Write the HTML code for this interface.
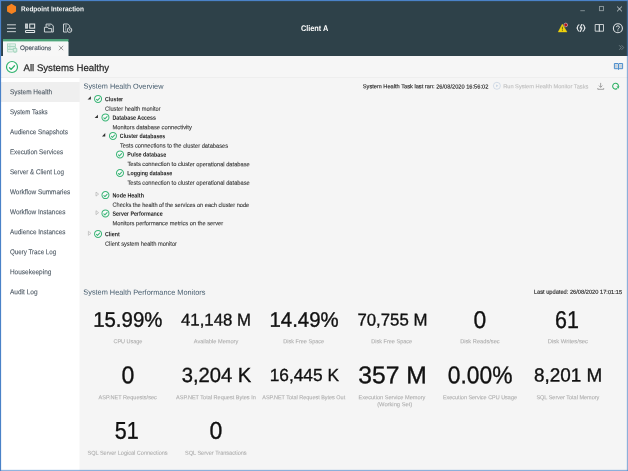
<!DOCTYPE html>
<html lang="en">
<head>
<meta charset="utf-8">
<title>Redpoint Interaction - Operations</title>
<style>
html,body{margin:0;padding:0;}
body{width:628px;height:471px;overflow:hidden;position:relative;background:#f5f5f5;font-family:"Liberation Sans", sans-serif;}
.a{position:absolute;display:block;}
.t{position:absolute;display:block;white-space:pre;font-family:"Liberation Sans", sans-serif;text-rendering:geometricPrecision;transform-origin:0 50%;}
#win{position:absolute;left:0;top:0;width:628px;height:471px;overflow:hidden;}
#txt{left:0;top:0;width:628px;height:471px;will-change:transform;}
#hdr{left:0;top:0;width:628px;height:56px;background:#2e4149;}
#tab{left:3px;top:39px;width:66px;height:17px;background:linear-gradient(90deg,#f7f7f7 0,#f7f7f7 65px,#93a0a5 65px,#93a0a5 66px);}
#tabg{left:3px;top:39px;width:66px;height:3px;background:linear-gradient(#4da37a 0,#4da37a 2px,#b4d9c6 2px,#b4d9c6 3px);}
#tabg2{left:68px;top:39px;width:1px;height:3px;background:#3f7463;}
#status{left:0;top:56px;width:628px;height:22px;background:#f6f6f6;}
#sline{left:0;top:77px;width:628px;height:1px;background:#eeeeee;}
#side{left:0;top:78px;width:80px;height:393px;background:linear-gradient(90deg,#fff 0,#fff 79px,#fafafa 79px,#fafafa 80px);}
#sel{left:0;top:82px;width:80px;height:20px;background:linear-gradient(90deg,#efefef 0,#efefef 79px,#f1f1f1 79px,#f1f1f1 80px);}
#bl{left:0;top:0;width:1px;height:471px;background:#4a82c8;}
#bl2{left:1px;top:0;width:1px;height:471px;background:rgba(74,130,200,0.1);}
#bt{left:0;top:0;width:628px;height:1px;background:#4a82c8;}
#bt2{left:0;top:1px;width:628px;height:1px;background:rgba(74,130,200,0.12);}
#br{left:627px;top:0;width:1px;height:471px;background:rgba(74,130,200,0.6);}
#br2{left:626px;top:0;width:1px;height:471px;background:rgba(74,134,210,0.1);}
#bb2{left:0;top:469px;width:628px;height:1px;background:rgba(74,134,210,0.1);}
#bb{left:0;top:470px;width:628px;height:1px;background:rgba(74,130,200,0.6);}

</style>
</head>
<body>
<div id="win">
<div class="a" id="hdr"></div>
<div class="a" id="tab"></div>
<div class="a" id="tabg"></div>
<div class="a" id="tabg2"></div>
<div class="a" id="status"></div>
<div class="a" id="sline"></div>
<div class="a" id="side"></div>
<div class="a" id="sel"></div>

<svg class="a" id="ico" style="left:0;top:0" width="628" height="471" viewBox="0 0 628 471">
<!-- logo -->
<path d="M11.55 3.8 L16.05 6.4 L16.05 11.5 L11.55 14.1 L7.05 11.5 L7.05 6.4 Z" fill="#f58220"/>
<!-- hamburger -->
<path d="M7 24.8 H15.9 M7 28.3 H15.9 M7 31.65 H15.9" stroke="#d5dadc" stroke-width="0.95" fill="none"/>
<!-- dashboard -->
<g fill="none" stroke="#e4e8ea" stroke-width="1.05">
<rect x="25.55" y="24.05" width="1.9" height="4.1" fill="#aeb7bb" stroke="#c9cfd2"/>
<rect x="29.75" y="24.05" width="4.9" height="4.1"/>
<rect x="25.55" y="30.45" width="9.1" height="2.1" rx="0.5"/>
</g>
<!-- file + folder -->
<g fill="none" stroke="#dde2e4" stroke-width="0.9">
<path d="M46.1 26.9 V24.1 H51.4 L53.3 26 V32 H51.9"/>
<path d="M47.7 25.8 H50.3" stroke-width="0.7"/>
<path d="M44.45 27.3 H47.7 L48.5 28.6 H51.7 V32 H44.45 Z"/>
</g>
<!-- file + clock -->
<g fill="none" stroke="#dde2e4" stroke-width="0.9">
<path d="M67 32 H63.5 V24 H67.8 L69.7 25.9 V27.3"/>
<path d="M65 26 H66.9 M65 28 H66.3 M65 29.9 H66" stroke-width="0.8"/>
<circle cx="69.5" cy="30.05" r="2.3" stroke-width="0.95"/>
<path d="M69.45 28.9 V30.2 H70.5" stroke-width="0.7"/>
</g>
<!-- tab icon -->
<g fill="none" stroke="#98cfb4" stroke-width="0.75">
<rect x="7.6" y="43.9" width="7.8" height="2.3" fill="#ecf6f1"/>
<rect x="7.6" y="46.8" width="7.8" height="2.3" fill="#ecf6f1"/>
<path d="M12.6 49.7 H7.6 V51.9 H12.6"/>
<path d="M9 45.05 H10.6 M9 47.95 H10.6" stroke-width="0.6"/>
<rect x="13.2" y="48.3" width="3.6" height="3.7" rx="0.5" fill="#dcefe6" stroke="#86c8aa"/>
<path d="M15 52 V53" stroke-width="0.7"/>
</g>
<!-- tab close -->
<path d="M59 45.8 L63.2 50.2 M63.2 45.8 L59 50.2" stroke="#6a6a6a" stroke-width="0.7" fill="none"/>
<!-- window controls -->
<path d="M580.3 10.7 H584.9" stroke="#87949a" stroke-width="0.9"/>
<rect x="599.45" y="6.45" width="4" height="4.2" fill="none" stroke="#8d999e" stroke-width="0.95"/>
<path d="M617.1 6.6 L621.9 11.3 M621.9 6.6 L617.1 11.3" stroke="#dfe4e6" stroke-width="0.85" fill="none"/>
<!-- warning -->
<path d="M562.3 24.1 L567 32 H558.2 Z" fill="#efd20c" stroke="#efd20c" stroke-width="0.4" stroke-linejoin="round"/>
<path d="M562.4 26.7 V29.5 M562.4 30.2 V31.1" stroke="#5a531c" stroke-width="0.85"/>
<circle cx="565.75" cy="24.95" r="1.85" fill="#b5121b" stroke="#dcdcdc" stroke-width="0.55"/>
<!-- sync -->
<g fill="none" stroke="#e2e6e8" stroke-width="1.1" stroke-linecap="round" stroke-linejoin="round">
<path d="M579 24.8 C576.8 26 576.8 30 579 31.2"/>
<path d="M583 24.8 C585.2 26 585.2 30 583 31.2"/>
<path d="M577.8 27 L576.6 28 L577.8 29 M584.2 27 L585.4 28 L584.2 29" stroke-width="0.8"/>
<path d="M581.7 24.5 L580.1 27.9 H581.9 L580.3 31.5" stroke-width="1.15"/>
</g>
<!-- book -->
<g fill="none" stroke="#d9dee0" stroke-width="0.9" stroke-linejoin="round">
<path d="M595.2 24.5 H599.35 V31.2 H595.2 Z"/>
<path d="M599.35 24.5 H603.5 V31.2 H599.35 Z"/>
<path d="M599.35 31.2 V31.8"/>
</g>
<!-- help -->
<circle cx="617.9" cy="28.2" r="4.5" fill="none" stroke="#e0e4e6" stroke-width="1.1"/>
<path d="M616.4 27.2 C616.4 25.3 619.4 25.3 619.4 27.2 C619.4 28.4 617.9 28.3 617.9 29.6 M617.9 30.4 V31.3" fill="none" stroke="#e0e4e6" stroke-width="1"/>
<!-- chevrons -->
<path d="M619.2 45.3 L621.3 47.55 L619.2 49.8 M621.6 45.3 L623.7 47.55 L621.6 49.8" fill="none" stroke="#7d8b92" stroke-width="0.8"/>
<!-- status right book icon -->
<g>
<path d="M614.4 63.5 H618 L618.5 63.9 L619 63.5 H622.6 V68.7 H619.3 L618.5 69.6 L617.7 68.7 H614.4 Z" fill="#d3dde6" stroke="#3f86c9" stroke-width="0.9" stroke-linejoin="round"/>
<path d="M618.5 64 V69.2" stroke="#3f86c9" stroke-width="0.9"/>
<path d="M615.6 64.9 V67.4 M616.8 64.9 V67.4 M620.2 64.9 V67.4 M621.4 64.9 V67.4" stroke="#b9c4cd" stroke-width="0.6"/>
</g>
<!-- play -->
<circle cx="496.9" cy="85.8" r="3.5" fill="none" stroke="#bccbdd" stroke-width="0.6"/>
<path d="M496.1 84.4 L498.3 85.8 L496.1 87.2 Z" fill="#c5d3e3"/>
<!-- download -->
<path d="M600.65 82.9 V87.2 M598.9 85.6 L600.65 87.4 L602.4 85.6 M597.8 88.1 V89.3 H603.7 V88.1" fill="none" stroke="#808080" stroke-width="0.7"/>
<!-- refresh -->
<path d="M617.3 88.5 A2.9 2.9 0 1 1 618.4 86.7" fill="none" stroke="#2bb062" stroke-width="1.05"/>
<path d="M616.5 86.6 L618.3 88.7 L619.5 86.2 Z" fill="#2bb062"/>
<!-- status check -->
<g transform="translate(12.00 67.00) scale(0.6395)"><circle r="8.6" fill="#fff" fill-opacity="0.6" stroke="#2fb36e" stroke-width="1.88"/><path d="M-3.9 1.2 L-1.3 3.8 L3.9 -2.0" fill="none" stroke="#2fb36e" stroke-width="1.97" stroke-linecap="round" stroke-linejoin="round"/></g>
<!-- tree checks -->
<g transform="translate(98.05 98.90) scale(0.4070)"><circle r="8.6" fill="#fff" fill-opacity="0.5" stroke="#3bb577" stroke-width="2.46"/><path d="M-3.9 1.2 L-1.3 3.8 L3.9 -2.0" fill="none" stroke="#3bb577" stroke-width="2.58" stroke-linecap="round" stroke-linejoin="round"/></g>
<g transform="translate(105.45 117.40) scale(0.4070)"><circle r="8.6" fill="#fff" fill-opacity="0.5" stroke="#3bb577" stroke-width="2.46"/><path d="M-3.9 1.2 L-1.3 3.8 L3.9 -2.0" fill="none" stroke="#3bb577" stroke-width="2.58" stroke-linecap="round" stroke-linejoin="round"/></g>
<g transform="translate(112.95 135.90) scale(0.4070)"><circle r="8.6" fill="#fff" fill-opacity="0.5" stroke="#3bb577" stroke-width="2.46"/><path d="M-3.9 1.2 L-1.3 3.8 L3.9 -2.0" fill="none" stroke="#3bb577" stroke-width="2.58" stroke-linecap="round" stroke-linejoin="round"/></g>
<g transform="translate(120.00 154.40) scale(0.4070)"><circle r="8.6" fill="#fff" fill-opacity="0.5" stroke="#3bb577" stroke-width="2.46"/><path d="M-3.9 1.2 L-1.3 3.8 L3.9 -2.0" fill="none" stroke="#3bb577" stroke-width="2.58" stroke-linecap="round" stroke-linejoin="round"/></g>
<g transform="translate(120.00 173.00) scale(0.4070)"><circle r="8.6" fill="#fff" fill-opacity="0.5" stroke="#3bb577" stroke-width="2.46"/><path d="M-3.9 1.2 L-1.3 3.8 L3.9 -2.0" fill="none" stroke="#3bb577" stroke-width="2.58" stroke-linecap="round" stroke-linejoin="round"/></g>
<g transform="translate(105.45 195.10) scale(0.4070)"><circle r="8.6" fill="#fff" fill-opacity="0.5" stroke="#3bb577" stroke-width="2.46"/><path d="M-3.9 1.2 L-1.3 3.8 L3.9 -2.0" fill="none" stroke="#3bb577" stroke-width="2.58" stroke-linecap="round" stroke-linejoin="round"/></g>
<g transform="translate(105.45 213.40) scale(0.4070)"><circle r="8.6" fill="#fff" fill-opacity="0.5" stroke="#3bb577" stroke-width="2.46"/><path d="M-3.9 1.2 L-1.3 3.8 L3.9 -2.0" fill="none" stroke="#3bb577" stroke-width="2.58" stroke-linecap="round" stroke-linejoin="round"/></g>
<g transform="translate(98.05 233.90) scale(0.4070)"><circle r="8.6" fill="#fff" fill-opacity="0.5" stroke="#3bb577" stroke-width="2.46"/><path d="M-3.9 1.2 L-1.3 3.8 L3.9 -2.0" fill="none" stroke="#3bb577" stroke-width="2.58" stroke-linecap="round" stroke-linejoin="round"/></g>
<!-- tree arrows -->
<path d="M90.90 99.60 l0 -3.3 l-3.3 3.3 Z" fill="#303030"/>
<path d="M97.95 118.10 l0 -3.3 l-3.3 3.3 Z" fill="#303030"/>
<path d="M105.25 136.40 l0 -3.3 l-3.3 3.3 Z" fill="#303030"/>
<path d="M96.00 192.10 l2.6 2 l-2.6 2 Z" fill="none" stroke="#aaa" stroke-width="0.6"/>
<path d="M96.00 210.70 l2.6 2 l-2.6 2 Z" fill="none" stroke="#aaa" stroke-width="0.6"/>
<path d="M88.40 231.30 l2.6 2 l-2.6 2 Z" fill="none" stroke="#aaa" stroke-width="0.6"/>
</svg>

<div class="a" id="txt">
<span class="t" style="left:21px;top:6px;font-size:7px;line-height:7px;font-weight:700;color:#f4f6f7;transform:translate(0.11px,0.30px) rotate(0.06deg) scaleX(0.9240)">Redpoint Interaction</span>
<span class="t" style="left:300px;top:24px;font-size:8.2px;line-height:8.2px;font-weight:700;color:#ffffff;transform:translate(0.91px,0.90px) rotate(0.06deg) scaleX(0.8927)">Client A</span>
<span class="t" style="left:20px;top:46px;font-size:6.6px;line-height:6.6px;font-weight:400;color:#47535e;-webkit-text-stroke:0.15px #47535e;transform:translate(0.05px,0.10px) rotate(0.06deg) scaleX(0.9647)">Operations</span>
<span class="t" style="left:23px;top:64px;font-size:9.6px;line-height:9.6px;font-weight:400;color:#2b2b2b;-webkit-text-stroke:0.25px #2b2b2b;transform:translate(0.50px,0.00px) rotate(0.06deg) scaleX(1.0040)">All Systems Healthy</span>
<span class="t" style="left:9px;top:89px;font-size:7.1px;line-height:7.1px;font-weight:400;color:#48545f;-webkit-text-stroke:0.1px #48545f;transform:translate(0.95px,0.30px) rotate(0.06deg) scaleX(0.9122)">System Health</span>
<span class="t" style="left:9px;top:109px;font-size:7.1px;line-height:7.1px;font-weight:400;color:#48545f;-webkit-text-stroke:0.1px #48545f;transform:translate(0.95px,0.30px) rotate(0.06deg) scaleX(0.8639)">System Tasks</span>
<span class="t" style="left:9px;top:129px;font-size:7.1px;line-height:7.1px;font-weight:400;color:#48545f;-webkit-text-stroke:0.1px #48545f;transform:translate(0.95px,0.30px) rotate(0.06deg) scaleX(0.8911)">Audience Snapshots</span>
<span class="t" style="left:9px;top:149px;font-size:7.1px;line-height:7.1px;font-weight:400;color:#48545f;-webkit-text-stroke:0.1px #48545f;transform:translate(0.95px,0.30px) rotate(0.06deg) scaleX(0.8801)">Execution Services</span>
<span class="t" style="left:9px;top:169px;font-size:7.1px;line-height:7.1px;font-weight:400;color:#48545f;-webkit-text-stroke:0.1px #48545f;transform:translate(0.95px,0.30px) rotate(0.06deg) scaleX(0.8788)">Server &amp; Client Log</span>
<span class="t" style="left:9px;top:189px;font-size:7.1px;line-height:7.1px;font-weight:400;color:#48545f;-webkit-text-stroke:0.1px #48545f;transform:translate(0.95px,0.30px) rotate(0.06deg) scaleX(0.9015)">Workflow Summaries</span>
<span class="t" style="left:9px;top:209px;font-size:7.1px;line-height:7.1px;font-weight:400;color:#48545f;-webkit-text-stroke:0.1px #48545f;transform:translate(0.95px,0.30px) rotate(0.06deg) scaleX(0.9026)">Workflow Instances</span>
<span class="t" style="left:9px;top:229px;font-size:7.1px;line-height:7.1px;font-weight:400;color:#48545f;-webkit-text-stroke:0.1px #48545f;transform:translate(0.95px,0.30px) rotate(0.06deg) scaleX(0.8946)">Audience Instances</span>
<span class="t" style="left:9px;top:249px;font-size:7.1px;line-height:7.1px;font-weight:400;color:#48545f;-webkit-text-stroke:0.1px #48545f;transform:translate(0.95px,0.30px) rotate(0.06deg) scaleX(0.8753)">Query Trace Log</span>
<span class="t" style="left:9px;top:269px;font-size:7.1px;line-height:7.1px;font-weight:400;color:#48545f;-webkit-text-stroke:0.1px #48545f;transform:translate(0.95px,0.30px) rotate(0.06deg) scaleX(0.9123)">Housekeeping</span>
<span class="t" style="left:9px;top:289px;font-size:7.1px;line-height:7.1px;font-weight:400;color:#48545f;-webkit-text-stroke:0.1px #48545f;transform:translate(0.95px,0.30px) rotate(0.06deg) scaleX(0.9205)">Audit Log</span>
<span class="t" style="left:83px;top:82px;font-size:7.3px;line-height:7.3px;font-weight:400;color:#435a6c;transform:translate(0.61px,0.60px) rotate(0.06deg) scaleX(0.9989)">System Health Overview</span>
<span class="t" style="left:83px;top:288px;font-size:7.3px;line-height:7.3px;font-weight:400;color:#435a6c;transform:translate(0.31px,0.60px) rotate(0.06deg) scaleX(1.0075)">System Health Performance Monitors</span>
<span class="t" style="left:362px;top:85px;font-size:5.8px;line-height:5.8px;font-weight:400;color:#2a2a2a;-webkit-text-stroke:0.15px #2a2a2a;transform:translate(0.77px,0.30px) rotate(0.06deg) scaleX(0.9795)">System Health Task last ran: 26/08/2020 16:56:02</span>
<span class="t" style="left:503px;top:85px;font-size:5.8px;line-height:5.8px;font-weight:400;color:#bebebe;-webkit-text-stroke:0.12px #bebebe;transform:translate(0.15px,0.30px) rotate(0.06deg) scaleX(0.9768)">Run System Health Monitor Tasks</span>
<span class="t" style="left:533px;top:290px;font-size:5.8px;line-height:5.8px;font-weight:400;color:#2a2a2a;-webkit-text-stroke:0.15px #2a2a2a;transform:translate(0.84px,0.80px) rotate(0.06deg) scaleX(0.9820)">Last updated: 26/08/2020 17:01:15</span>
<span class="t" style="left:105px;top:97px;font-size:6.25px;line-height:6.25px;font-weight:700;color:#222;transform:translate(0.00px,0.20px) rotate(0.06deg) scaleX(0.8428)">Cluster</span>
<span class="t" style="left:105px;top:106px;font-size:6px;line-height:6px;font-weight:400;color:#3a3a3a;-webkit-text-stroke:0.12px #3a3a3a;transform:translate(0.05px,0.66px) rotate(0.06deg) scaleX(0.9477)">Cluster health monitor</span>
<span class="t" style="left:112px;top:115px;font-size:6.25px;line-height:6.25px;font-weight:700;color:#222;transform:translate(0.45px,0.80px) rotate(0.06deg) scaleX(0.8487)">Database Access</span>
<span class="t" style="left:112px;top:125px;font-size:6px;line-height:6px;font-weight:400;color:#3a3a3a;-webkit-text-stroke:0.12px #3a3a3a;transform:translate(0.50px,0.26px) rotate(0.06deg) scaleX(0.9626)">Monitors database connectivity</span>
<span class="t" style="left:119px;top:134px;font-size:6.25px;line-height:6.25px;font-weight:700;color:#222;transform:translate(0.85px,0.10px) rotate(0.06deg) scaleX(0.8421)">Cluster databases</span>
<span class="t" style="left:119px;top:143px;font-size:6px;line-height:6px;font-weight:400;color:#3a3a3a;-webkit-text-stroke:0.12px #3a3a3a;transform:translate(0.90px,0.56px) rotate(0.06deg) scaleX(0.9576)">Tests connections to the cluster databases</span>
<span class="t" style="left:127px;top:152px;font-size:6.25px;line-height:6.25px;font-weight:700;color:#222;transform:translate(0.35px,0.60px) rotate(0.06deg) scaleX(0.8524)">Pulse database</span>
<span class="t" style="left:127px;top:162px;font-size:6px;line-height:6px;font-weight:400;color:#3a3a3a;-webkit-text-stroke:0.12px #3a3a3a;transform:translate(0.40px,0.06px) rotate(0.06deg) scaleX(0.9524)">Tests connection to cluster operational database</span>
<span class="t" style="left:127px;top:171px;font-size:6.25px;line-height:6.25px;font-weight:700;color:#222;transform:translate(0.35px,0.20px) rotate(0.06deg) scaleX(0.8394)">Logging database</span>
<span class="t" style="left:127px;top:180px;font-size:6px;line-height:6px;font-weight:400;color:#3a3a3a;-webkit-text-stroke:0.12px #3a3a3a;transform:translate(0.40px,0.66px) rotate(0.06deg) scaleX(0.9524)">Tests connection to cluster operational database</span>
<span class="t" style="left:112px;top:193px;font-size:6.25px;line-height:6.25px;font-weight:700;color:#222;transform:translate(0.45px,0.40px) rotate(0.06deg) scaleX(0.8633)">Node Health</span>
<span class="t" style="left:112px;top:202px;font-size:6px;line-height:6px;font-weight:400;color:#3a3a3a;-webkit-text-stroke:0.12px #3a3a3a;transform:translate(0.50px,0.86px) rotate(0.06deg) scaleX(0.9379)">Checks the health of the services on each cluster node</span>
<span class="t" style="left:112px;top:211px;font-size:6.25px;line-height:6.25px;font-weight:700;color:#222;transform:translate(0.45px,0.70px) rotate(0.06deg) scaleX(0.8465)">Server Performance</span>
<span class="t" style="left:112px;top:221px;font-size:6px;line-height:6px;font-weight:400;color:#3a3a3a;-webkit-text-stroke:0.12px #3a3a3a;transform:translate(0.50px,0.16px) rotate(0.06deg) scaleX(0.9529)">Monitors performance metrics on the server</span>
<span class="t" style="left:104px;top:232px;font-size:6.25px;line-height:6.25px;font-weight:700;color:#222;transform:translate(0.95px,0.20px) rotate(0.06deg) scaleX(0.8505)">Client</span>
<span class="t" style="left:105px;top:241px;font-size:6px;line-height:6px;font-weight:400;color:#3a3a3a;-webkit-text-stroke:0.12px #3a3a3a;transform:translate(0.00px,0.66px) rotate(0.06deg) scaleX(0.9508)">Client system health monitor</span>
<span class="t" style="left:93px;top:309px;font-size:21px;line-height:21px;font-weight:400;color:#111;-webkit-text-stroke:0.35px #111;transform:translate(0.17px,0.82px) rotate(0.06deg) scaleX(0.9719)">15.99%</span>
<span class="t" style="left:113px;top:340px;font-size:5.8px;line-height:5.8px;font-weight:400;color:#adadad;-webkit-text-stroke:0.1px #adadad;transform:translate(0.53px,0.30px) rotate(0.06deg) scaleX(0.9428)">CPU Usage</span>
<span class="t" style="left:181px;top:311px;font-size:17px;line-height:17px;font-weight:400;color:#111;-webkit-text-stroke:0.35px #111;transform:translate(0.07px,0.41px) rotate(0.06deg) scaleX(0.9841)">41,148 M</span>
<span class="t" style="left:193px;top:340px;font-size:5.8px;line-height:5.8px;font-weight:400;color:#adadad;-webkit-text-stroke:0.1px #adadad;transform:translate(0.80px,0.30px) rotate(0.06deg) scaleX(0.9654)">Available Memory</span>
<span class="t" style="left:269px;top:309px;font-size:21px;line-height:21px;font-weight:400;color:#111;-webkit-text-stroke:0.35px #111;transform:translate(0.47px,0.82px) rotate(0.06deg) scaleX(0.9705)">14.49%</span>
<span class="t" style="left:283px;top:340px;font-size:5.8px;line-height:5.8px;font-weight:400;color:#adadad;-webkit-text-stroke:0.1px #adadad;transform:translate(0.36px,0.30px) rotate(0.06deg) scaleX(0.9503)">Disk Free Space</span>
<span class="t" style="left:357px;top:311px;font-size:17px;line-height:17px;font-weight:400;color:#111;-webkit-text-stroke:0.35px #111;transform:translate(0.46px,0.41px) rotate(0.06deg) scaleX(0.9871)">70,755 M</span>
<span class="t" style="left:371px;top:340px;font-size:5.8px;line-height:5.8px;font-weight:400;color:#adadad;-webkit-text-stroke:0.1px #adadad;transform:translate(0.36px,0.30px) rotate(0.06deg) scaleX(0.9503)">Disk Free Space</span>
<span class="t" style="left:473px;top:308px;font-size:24.25px;line-height:24.25px;font-weight:400;color:#111;-webkit-text-stroke:0.35px #111;transform:translate(0.61px,0.92px) rotate(0.06deg) scaleX(0.9426)">0</span>
<span class="t" style="left:460px;top:340px;font-size:5.8px;line-height:5.8px;font-weight:400;color:#adadad;-webkit-text-stroke:0.1px #adadad;transform:translate(0.14px,0.30px) rotate(0.06deg) scaleX(0.9821)">Disk Reads/sec</span>
<span class="t" style="left:555px;top:308px;font-size:24.25px;line-height:24.25px;font-weight:400;color:#111;-webkit-text-stroke:0.35px #111;transform:translate(0.13px,0.92px) rotate(0.06deg) scaleX(0.8847)">61</span>
<span class="t" style="left:547px;top:340px;font-size:5.8px;line-height:5.8px;font-weight:400;color:#adadad;-webkit-text-stroke:0.1px #adadad;transform:translate(0.83px,0.30px) rotate(0.06deg) scaleX(1.0083)">Disk Writes/sec</span>
<span class="t" style="left:121px;top:364px;font-size:24.25px;line-height:24.25px;font-weight:400;color:#111;-webkit-text-stroke:0.35px #111;transform:translate(0.51px,0.22px) rotate(0.06deg) scaleX(0.9510)">0</span>
<span class="t" style="left:98px;top:396px;font-size:5.8px;line-height:5.8px;font-weight:400;color:#adadad;-webkit-text-stroke:0.1px #adadad;transform:translate(0.60px,0.20px) rotate(0.06deg) scaleX(0.9587)">ASP.NET Requests/sec</span>
<span class="t" style="left:181px;top:365px;font-size:20.5px;line-height:20.5px;font-weight:400;color:#111;-webkit-text-stroke:0.35px #111;transform:translate(0.69px,0.95px) rotate(0.06deg) scaleX(0.9841)">3,204 K</span>
<span class="t" style="left:176px;top:396px;font-size:5.8px;line-height:5.8px;font-weight:400;color:#adadad;-webkit-text-stroke:0.1px #adadad;transform:translate(0.00px,0.20px) rotate(0.06deg) scaleX(0.9558)">ASP.NET Total Request Bytes In</span>
<span class="t" style="left:269px;top:366px;font-size:17.5px;line-height:17.5px;font-weight:400;color:#111;-webkit-text-stroke:0.35px #111;transform:translate(0.69px,0.92px) rotate(0.06deg) scaleX(0.9882)">16,445 K</span>
<span class="t" style="left:262px;top:396px;font-size:5.8px;line-height:5.8px;font-weight:400;color:#adadad;-webkit-text-stroke:0.1px #adadad;transform:translate(0.30px,0.20px) rotate(0.06deg) scaleX(0.9418)">ASP.NET Total Request Bytes Out</span>
<span class="t" style="left:358px;top:364px;font-size:24.25px;line-height:24.25px;font-weight:400;color:#111;-webkit-text-stroke:0.35px #111;transform:translate(0.26px,0.22px) rotate(0.06deg) scaleX(1.0154)">357 M</span>
<span class="t" style="left:358px;top:396px;font-size:5.8px;line-height:5.8px;font-weight:400;color:#adadad;-webkit-text-stroke:0.1px #adadad;transform:translate(0.45px,0.20px) rotate(0.06deg) scaleX(0.9706)">Execution Service Memory</span>
<span class="t" style="left:377px;top:403px;font-size:5.8px;line-height:5.8px;font-weight:400;color:#adadad;-webkit-text-stroke:0.1px #adadad;transform:translate(0.15px,0.30px) rotate(0.06deg) scaleX(0.9916)">(Working Set)</span>
<span class="t" style="left:447px;top:364px;font-size:24.25px;line-height:24.25px;font-weight:400;color:#111;-webkit-text-stroke:0.35px #111;transform:translate(0.82px,0.22px) rotate(0.06deg) scaleX(0.9402)">0.00%</span>
<span class="t" style="left:442px;top:396px;font-size:5.8px;line-height:5.8px;font-weight:400;color:#adadad;-webkit-text-stroke:0.1px #adadad;transform:translate(0.96px,0.20px) rotate(0.06deg) scaleX(0.9412)">Execution Service CPU Usage</span>
<span class="t" style="left:533px;top:366px;font-size:19px;line-height:19px;font-weight:400;color:#111;-webkit-text-stroke:0.35px #111;transform:translate(0.94px,0.47px) rotate(0.06deg) scaleX(0.9954)">8,201 M</span>
<span class="t" style="left:536px;top:396px;font-size:5.8px;line-height:5.8px;font-weight:400;color:#adadad;-webkit-text-stroke:0.1px #adadad;transform:translate(0.38px,0.20px) rotate(0.06deg) scaleX(0.9475)">SQL Server Total Memory</span>
<span class="t" style="left:114px;top:419px;font-size:24.25px;line-height:24.25px;font-weight:400;color:#111;-webkit-text-stroke:0.35px #111;transform:translate(0.74px,0.72px) rotate(0.06deg) scaleX(0.8881)">51</span>
<span class="t" style="left:87px;top:451px;font-size:5.8px;line-height:5.8px;font-weight:400;color:#adadad;-webkit-text-stroke:0.1px #adadad;transform:translate(0.48px,0.70px) rotate(0.06deg) scaleX(0.9553)">SQL Server Logical Connections</span>
<span class="t" style="left:209px;top:419px;font-size:24.25px;line-height:24.25px;font-weight:400;color:#111;-webkit-text-stroke:0.35px #111;transform:translate(0.51px,0.72px) rotate(0.06deg) scaleX(0.9510)">0</span>
<span class="t" style="left:184px;top:451px;font-size:5.8px;line-height:5.8px;font-weight:400;color:#adadad;-webkit-text-stroke:0.1px #adadad;transform:translate(0.98px,0.70px) rotate(0.06deg) scaleX(0.9551)">SQL Server Transactions</span>
</div>
<div class="a" id="bb2"></div>
<div class="a" id="br2"></div>
<div class="a" id="bb"></div>
<div class="a" id="br"></div>
<div class="a" id="bl2"></div>
<div class="a" id="bt2"></div>
<div class="a" id="bl"></div>
<div class="a" id="bt"></div>

</div>
</body>
</html>
